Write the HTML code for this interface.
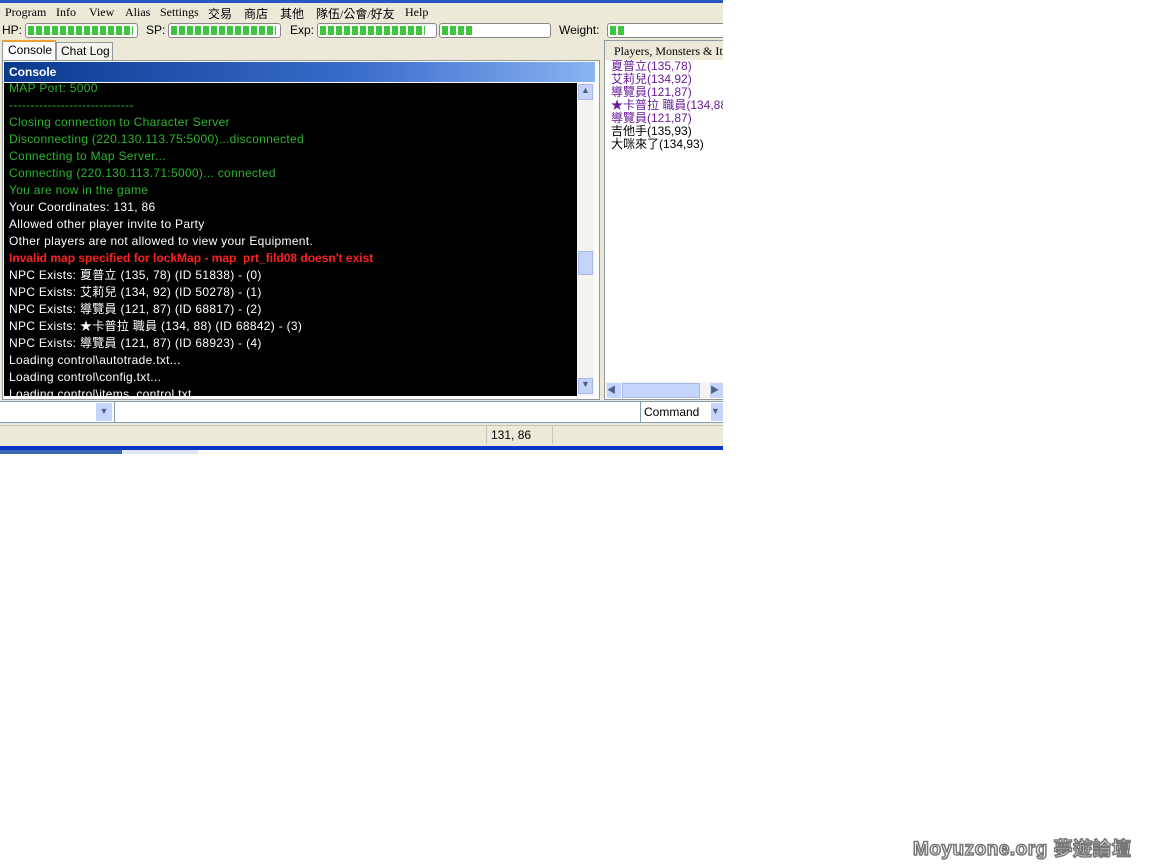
<!DOCTYPE html>
<html><head><meta charset="utf-8"><style>
*{margin:0;padding:0;box-sizing:border-box}
body{width:1152px;height:864px;background:#fff;position:relative;overflow:hidden;font-family:"Liberation Sans","Noto Sans CJK TC",sans-serif;font-size:12px}
.a{position:absolute}
#app{position:absolute;left:0;top:0;width:723px;height:454px;overflow:hidden}
.appbg{left:0;top:0;width:723px;height:446px;background:#ece9d8}
.menu span{position:absolute;top:5px;font-family:"Liberation Serif","Noto Sans CJK TC",serif;font-size:12px}
.bar{position:absolute;top:23px;height:15px;border:1px solid #888;border-radius:3px;background:#fff;padding:2px}
.fill{height:9px;background:repeating-linear-gradient(90deg,#3fc43f 0 6px,#fff 6px 8px)}
.lbl{position:absolute;top:23px;font-size:12px}
.con{left:4px;top:83px;width:574px;height:313px;background:#000;overflow:hidden;font-size:12px;letter-spacing:0.3px}
.con div{height:17px;line-height:17px;padding-left:5px;white-space:nowrap}
.g{color:#2db52d}.w{color:#fff}.r{color:#ff2020;font-weight:bold;letter-spacing:0}
.list div{height:13px;line-height:13px;font-size:12px;white-space:nowrap}
.p{color:#6a1a9a}
</style></head><body>
<div id="app">
<div class="a appbg"></div>
<div class="a" style="left:0;top:0;width:723px;height:3px;background:#2858c8"></div>
<div class="menu">
<span style="left:5px">Program</span><span style="left:56px">Info</span><span style="left:89px">View</span><span style="left:125px">Alias</span><span style="left:160px">Settings</span><span style="left:208px">交易</span><span style="left:244px">商店</span><span style="left:280px">其他</span><span style="left:316px">隊伍/公會/好友</span><span style="left:405px">Help</span>
</div>
<span class="lbl" style="left:2px">HP:</span>
<div class="bar" style="left:25px;width:113px"><div class="fill" style="width:105px"></div></div>
<span class="lbl" style="left:146px">SP:</span>
<div class="bar" style="left:168px;width:113px"><div class="fill" style="width:105px"></div></div>
<span class="lbl" style="left:290px">Exp:</span>
<div class="bar" style="left:317px;width:120px"><div class="fill" style="width:105px"></div></div>
<div class="bar" style="left:439px;width:112px"><div class="fill" style="width:32px"></div></div>
<span class="lbl" style="left:559px">Weight:</span>
<div class="bar" style="left:607px;width:130px"><div class="fill" style="width:14px"></div></div>
<div class="a" style="left:2px;top:40px;width:54px;height:21px;background:#fcfcfe;border:1px solid #919b9c;border-bottom:none;border-top:2px solid #f0a030;font-size:12px;padding:1px 0 0 5px">Console</div>
<div class="a" style="left:56px;top:42px;width:57px;height:19px;background:#f4f3ee;border:1px solid #919b9c;font-size:12px;padding:1px 0 0 4px">Chat Log</div>
<div class="a" style="left:2px;top:60px;width:598px;height:340px;background:#fcfcfe;border:1px solid #919b9c"></div>
<div class="a" style="left:4px;top:62px;width:591px;height:20px;background:linear-gradient(90deg,#0a3a8e,#3a6ccc 60%,#8ab4f0);color:#fff;font-weight:bold;padding:3px 0 0 5px">Console</div>
<div class="a con">
<div class="g" style="margin-top:-3px">MAP Port: 5000</div>
<div class="g">-----------------------------</div>
<div class="g">Closing connection to Character Server</div>
<div class="g">Disconnecting (220.130.113.75:5000)...disconnected</div>
<div class="g">Connecting to Map Server...</div>
<div class="g">Connecting (220.130.113.71:5000)... connected</div>
<div class="g">You are now in the game</div>
<div class="w">Your Coordinates: 131, 86</div>
<div class="w">Allowed other player invite to Party</div>
<div class="w">Other players are not allowed to view your Equipment.</div>
<div class="r">Invalid map specified for lockMap - map&nbsp; prt_fild08 doesn't exist</div>
<div class="w">NPC Exists: 夏普立 (135, 78) (ID 51838) - (0)</div>
<div class="w">NPC Exists: 艾莉兒 (134, 92) (ID 50278) - (1)</div>
<div class="w">NPC Exists: 導覽員 (121, 87) (ID 68817) - (2)</div>
<div class="w">NPC Exists: ★卡普拉 職員 (134, 88) (ID 68842) - (3)</div>
<div class="w">NPC Exists: 導覽員 (121, 87) (ID 68923) - (4)</div>
<div class="w">Loading control\autotrade.txt...</div>
<div class="w">Loading control\config.txt...</div>
<div class="w">Loading control\items_control.txt...</div>
</div>
<div class="a" style="left:577px;top:83px;width:17px;height:313px;background:#f4f3f0"></div>
<div class="a" style="left:578px;top:84px;width:15px;height:16px;background:#c4d4fa;border:1px solid #a8b8e8;font-size:9px;color:#4d6185;text-align:center">▲</div>
<div class="a" style="left:578px;top:251px;width:15px;height:24px;background:#c4d4fa;border:1px solid #a8b8e8"></div>
<div class="a" style="left:578px;top:378px;width:15px;height:16px;background:#c4d4fa;border:1px solid #a8b8e8;font-size:9px;color:#4d6185;text-align:center">▼</div>
<div class="a" style="left:604px;top:40px;width:120px;height:360px;background:#fff;border:1px solid #919b9c"></div>
<div class="a" style="left:605px;top:41px;width:118px;height:19px;background:#ece9d8;font-family:'Liberation Serif','Noto Sans CJK TC',serif;padding:3px 0 0 9px;white-space:nowrap;overflow:hidden">Players, Monsters &amp; Items</div>
<div class="a list" style="left:611px;top:60px;width:112px;overflow:hidden">
<div class="p">夏普立(135,78)</div><div class="p">艾莉兒(134,92)</div><div class="p">導覽員(121,87)</div><div class="p">★卡普拉 職員(134,88)</div><div class="p">導覽員(121,87)</div><div>吉他手(135,93)</div><div>大咪來了(134,93)</div>
</div>
<div class="a" style="left:605px;top:382px;width:118px;height:16px;background:#f4f3f0"></div>
<div class="a" style="left:607px;top:383px;width:14px;height:15px;background:#c4d4fa;font-size:9px;color:#4d6185">◀</div>
<div class="a" style="left:622px;top:383px;width:78px;height:15px;background:#c4d4fa;border:1px solid #a8b8e8"></div>
<div class="a" style="left:710px;top:383px;width:13px;height:15px;background:#c4d4fa;font-size:9px;color:#4d6185">▶</div>
<div class="a" style="left:0;top:401px;width:723px;height:22px;background:#fff;border-top:1px solid #7f9db9;border-bottom:1px solid #7f9db9"></div>
<div class="a" style="left:96px;top:403px;width:16px;height:18px;background:#c4d4fa;font-size:9px;color:#4d6185;text-align:center;padding-top:3px">▼</div>
<div class="a" style="left:114px;top:402px;width:1px;height:20px;background:#7f9db9"></div>
<div class="a" style="left:640px;top:402px;width:1px;height:20px;background:#7f9db9"></div>
<div class="a" style="left:644px;top:405px">Command</div>
<div class="a" style="left:711px;top:403px;width:12px;height:18px;background:#c4d4fa;font-size:9px;color:#4d6185;padding-top:3px">▼</div>
<div class="a" style="left:0;top:425px;width:723px;height:21px;background:#ece9d8;border-top:1px solid #c8c5b8"></div>
<div class="a" style="left:486px;top:426px;width:1px;height:18px;background:#c8c5b8"></div>
<div class="a" style="left:552px;top:426px;width:1px;height:18px;background:#c8c5b8"></div>
<div class="a" style="left:491px;top:428px">131, 86</div>
<div class="a" style="left:0;top:446px;width:723px;height:4px;background:#0a36c8"></div>
<div class="a" style="left:0;top:450px;width:122px;height:4px;background:#3a6ab8"></div>
<div class="a" style="left:122px;top:450px;width:76px;height:4px;background:#dfe8f8"></div>
</div>
<div class="a" style="left:913px;top:834px;font-family:'Liberation Sans','Noto Sans CJK TC',sans-serif;font-weight:bold;font-size:19px;color:#fff;-webkit-text-stroke:1.5px #777;letter-spacing:0.5px">Moyuzone.org 夢遊論壇</div>
</body></html>
